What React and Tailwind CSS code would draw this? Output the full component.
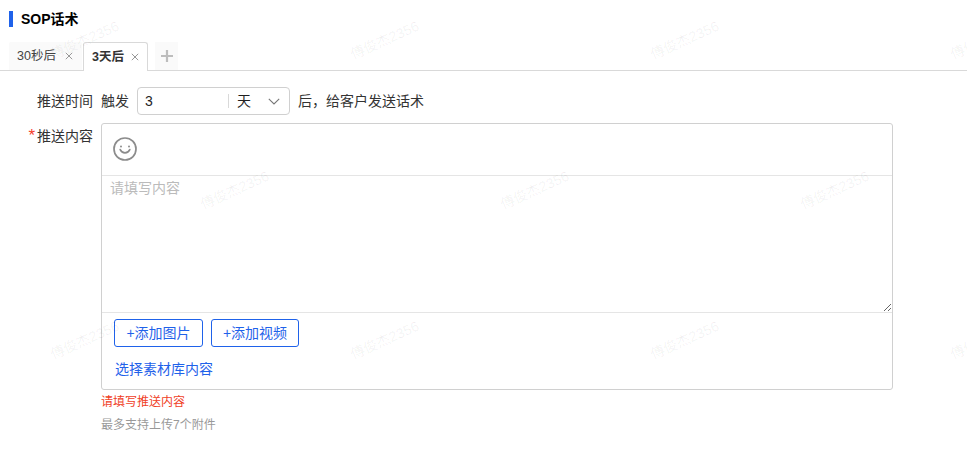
import React from 'react';

// 水印：上面一层清晰、下面一层很淡
const marks = [
  'left-[48px] top-[32px]', 'left-[348px] top-[32px]', 'left-[648px] top-[32px]', 'left-[948px] top-[32px]',
  'left-[198px] top-[182px]', 'left-[498px] top-[182px]', 'left-[798px] top-[182px]',
  'left-[48px] top-[332px]', 'left-[348px] top-[332px]', 'left-[648px] top-[332px]', 'left-[948px] top-[332px]',
];
const faintMarks = [
  'left-[770px] top-[75px]', 'left-[340px] top-[200px]', 'left-[636px] top-[278px]',
  'left-[692px] top-[375px]', 'left-[432px] top-[275px]',
];

function Watermarks() {
  return (
    <div className="absolute inset-0 overflow-hidden pointer-events-none">
      {marks.map((pos) => (
        <span key={pos} className={`absolute ${pos} text-[14px] leading-[16px] text-black/[0.06] -rotate-[24deg] whitespace-nowrap`}>
          傅俊杰2356
        </span>
      ))}
      {faintMarks.map((pos) => (
        <span key={pos} className={`absolute ${pos} text-[20px] leading-[24px] text-black/[0.01] -rotate-[30deg] whitespace-nowrap`}>
          傅俊杰2356
        </span>
      ))}
    </div>
  );
}

function CloseIcon() {
  return (
    <svg width="8" height="8" viewBox="0 0 8 8" fill="none" stroke="#8c8c8c" strokeWidth="0.9">
      <path d="M0.8 0.8 7.2 7.2M7.2 0.8 0.8 7.2" />
    </svg>
  );
}

function SmileIcon() {
  return (
    <svg width="24" height="24" viewBox="0 0 24 24" fill="none" stroke="#8c8c8c" strokeWidth="1.7">
      <circle cx="12" cy="12" r="11" />
      <path d="M7.2 12.6c1 2.2 3 3.2 4.8 3.2s3.800-1 4.800-3.200" strokeLinecap="round" />
      <circle cx="8" cy="9.400" r="1" fill="#8c8c8c" stroke="none" />
      <circle cx="16" cy="9.400" r="1" fill="#8c8c8c" stroke="none" />
    </svg>
  );
}

export default function App() {
  return (
    <div className="relative w-[967px] h-[460px] bg-white overflow-hidden text-[14px] leading-[20px] text-[#1f1f1f] font-['Liberation_Sans','Noto_Sans_CJK_SC',sans-serif]">
      {/* 标题 */}
      <div className="flex items-center h-4 mt-[11px] ml-[9px]">
        <div className="w-1 h-4 bg-[#1f62ea]" />
        <span className="ml-2 text-[14px] font-bold text-black">SOP话术</span>
      </div>

      {/* 标签页 */}
      <div className="flex items-end h-[29px] mt-[15px] pl-[9px] border-b border-[#d9d9d9]">
        <div className="flex items-center w-[73px] h-[28px] pl-2 bg-[#fafafa] rounded-t-[2px] text-[12.500px] text-[#444]">
          <span>30秒后</span>
          <span className="ml-[9px] flex"><CloseIcon /></span>
        </div>
        <div className="flex items-center w-[65px] h-[29px] ml-px pl-2 bg-white border border-b-0 border-[#d9d9d9] rounded-t-[3px] text-[12.500px] font-bold text-[#333] -mb-px">
          <span>3天后</span>
          <span className="ml-[7px] flex"><CloseIcon /></span>
        </div>
        <div className="flex items-center justify-center w-[23px] h-[28px] ml-[7px] bg-[#fafafa]">
          <svg width="12" height="12" viewBox="0 0 12 12" stroke="#bdbdbd" strokeWidth="2.200">
            <path d="M6 0v12M0 6h12" />
          </svg>
        </div>
      </div>

      {/* 推送时间 */}
      <div className="flex items-center h-[28px] mt-[16px]">
        <label className="w-[93px] text-right text-[#333]">推送时间</label>
        <span className="ml-2 text-[#333]">触发</span>
        <div className="flex items-center w-[153px] h-[28px] ml-2 border border-[#d0d0d0] rounded-[4px]">
          <span className="w-[90px] pl-[7px]">3</span>
          <div className="w-px h-[14px] bg-[#d9d9d9]" />
          <span className="ml-2">天</span>
          <svg className="ml-[17px]" width="12" height="7" viewBox="0 0 12 7" fill="none" stroke="#777" strokeWidth="1.100">
            <path d="M0.8 0.8 6 6 11.200 0.8" />
          </svg>
        </div>
        <span className="ml-2 text-[#333]">后，给客户发送话术</span>
      </div>

      {/* 推送内容 */}
      <div className="flex mt-2">
        <label className="flex justify-end w-[93px] text-[#333] mt-[3px]">
          <span className="mr-[2px] text-[17px] text-[#f5402c]">*</span>推送内容
        </label>
        <div className="ml-2">
          <div className="flex flex-col w-[792px] h-[267px] border border-[#d0d0d0] rounded-[3px]">
            <div className="flex items-center h-[52px] pl-[11px] pb-px border-b border-[#e5e5e5]">
              <SmileIcon />
            </div>
            <textarea
              placeholder="请填写内容"
              className="block w-full h-[136px] px-2 pt-[2px] text-[14px] leading-[20px] outline-none resize-y placeholder:text-[#bbbbbb] bg-transparent"
            />
            <div className="flex gap-2 pl-3 pt-[6px] border-t border-[#e5e5e5]">
              <button className="w-[89px] h-[28px] border border-[#1f62ea] rounded-[3px] text-[#1f62ea]">+添加图片</button>
              <button className="w-[88px] h-[28px] border border-[#1f62ea] rounded-[3px] text-[#1f62ea]">+添加视频</button>
            </div>
            <a className="ml-[13px] mt-[12px] text-[#1f62ea]">选择素材库内容</a>
          </div>
          <div className="mt-[3px] text-[12px] leading-[18px] text-[#f0401f]">请填写推送内容</div>
          <div className="mt-[5px] text-[12px] leading-[18px] text-[#999]">最多支持上传7个附件</div>
        </div>
      </div>

      <Watermarks />
    </div>
  );
}
